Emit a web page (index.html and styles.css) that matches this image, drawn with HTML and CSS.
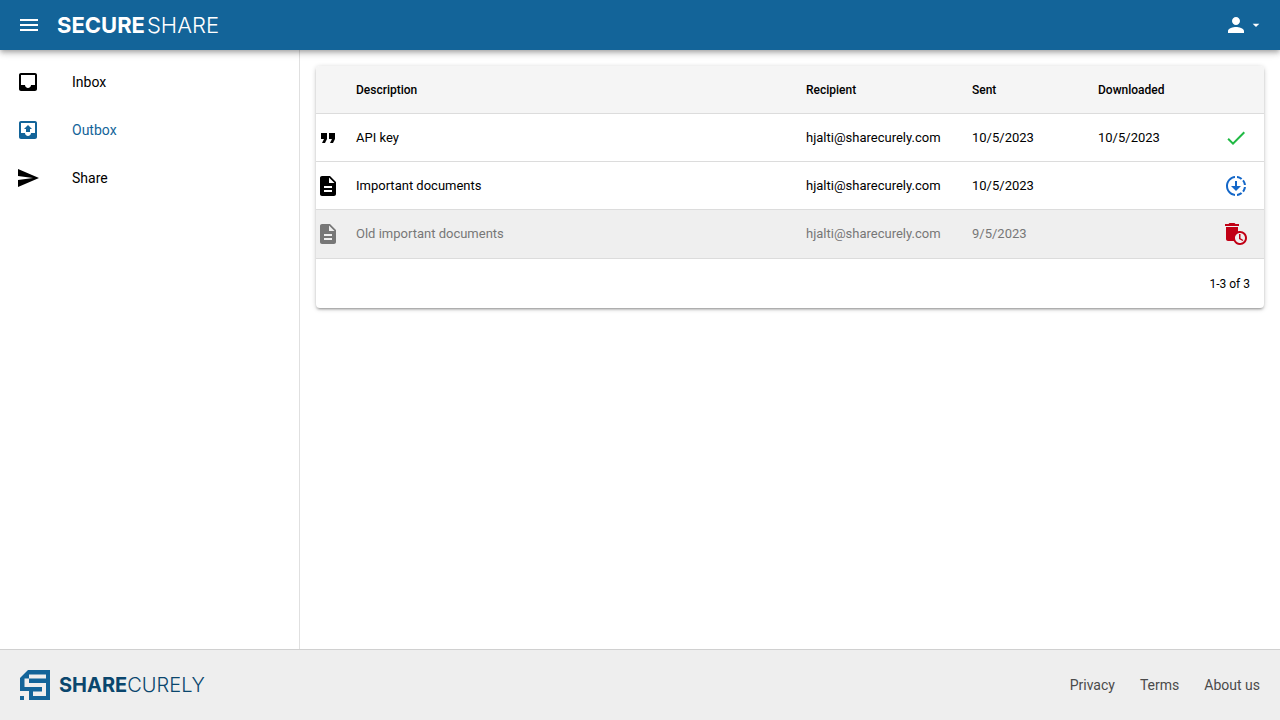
FILE: index.html
```html
<!DOCTYPE html>
<html lang="en">
<head>
<meta charset="utf-8">
<meta name="viewport" content="width=device-width, initial-scale=1">
<title>SecureShare – Outbox</title>
<link rel="stylesheet" href="styles.css">
</head>
<body>
<header class="topbar">
  <button class="icon-button" type="button" aria-label="Menu"><svg class="icon" viewBox="0 0 24 24"><path d="M3 18h18v-2H3v2zm0-5h18v-2H3v2zm0-7v2h18V6H3z"/></svg></button>
  <a class="brand" href="#"><span class="strong">SECURE</span><span class="thin">SHARE</span></a>
  <button class="account" type="button" aria-label="Account">
    <svg class="icon" viewBox="0 0 24 24"><path d="M12 12c2.210 0 4-1.790 4-4s-1.790-4-4-4-4 1.790-4 4 1.790 4 4 4zm0 2c-2.670 0-8 1.340-8 4v2h16v-2c0-2.660-5.330-4-8-4z"/></svg>
    <svg class="caret" viewBox="0 0 24 24"><path d="M7 10l5 5 5-5z"/></svg>
  </button>
</header>
<div class="middle">
  <nav class="sidebar">
    <a class="nav-item" href="#"><svg class="icon" viewBox="0 0 24 24"><path d="M19 3H4.990c-1.110 0-1.980.89-1.980 2L3 19c0 1.100.88 2 1.990 2H19c1.100 0 2-.9 2-2V5c0-1.110-.9-2-2-2zm0 12h-4c0 1.660-1.350 3-3 3s-3-1.340-3-3H4.990V5H19v10z"/></svg>Inbox</a>
    <a class="nav-item active" href="#"><svg class="icon" viewBox="0 0 24 24"><path d="M19 3H4.990c-1.110 0-1.980.89-1.980 2L3 19c0 1.100.88 2 1.990 2H19c1.100 0 2-.9 2-2V5c0-1.110-.9-2-2-2zm0 12h-4c0 1.660-1.350 3-3 3s-3-1.340-3-3H4.990V5H19v10zM8 11h2v3h4v-3h2l-4-4-4 4z"/></svg>Outbox</a>
    <a class="nav-item" href="#"><svg class="icon" viewBox="0 0 24 24"><path d="M2.010 21L23 12 2.010 3 2 10l15 2-15 2z"/></svg>Share</a>
  </nav>
  <main class="content">
    <div class="card">
      <table class="messages">
        <colgroup><col class="c-type"><col><col class="c-recipient"><col class="c-sent"><col class="c-downloaded"><col class="c-status"></colgroup>
        <thead>
          <tr><th></th><th>Description</th><th>Recipient</th><th>Sent</th><th>Downloaded</th><th></th></tr>
        </thead>
        <tbody>
          <tr>
            <td class="type"><svg class="icon" viewBox="0 0 24 24"><path d="M6 17h3l2-4V7H5v6h3zm8 0h3l2-4V7h-6v6h3z"/></svg></td>
            <td>API key</td><td>hjalti@sharecurely.com</td><td>10/5/2023</td><td>10/5/2023</td>
            <td class="status ok"><svg class="icon" viewBox="0 0 24 24"><path d="M9 16.170L4.830 12l-1.420 1.410L9 19 21 7l-1.410-1.410z"/></svg></td>
          </tr>
          <tr>
            <td class="type"><svg class="icon" viewBox="0 0 24 24"><path d="M14 2H6c-1.100 0-1.990.9-1.990 2L4 20c0 1.100.89 2 1.990 2H18c1.100 0 2-.9 2-2V8l-6-6zm2 16H8v-2h8v2zm0-4H8v-2h8v2zm-3-5V3.500L18.500 9H13z"/></svg></td>
            <td>Important documents</td><td>hjalti@sharecurely.com</td><td>10/5/2023</td><td></td>
            <td class="status pending"><svg class="icon" viewBox="0 0 24 24"><path d="M18.320 4.260C16.840 3.050 15.010 2.250 13 2.050v2.020c1.460.18 2.790.76 3.900 1.620l1.420-1.430zM19.930 11h2.020c-.2-2.010-1-3.840-2.210-5.320L18.310 7.100c.86 1.110 1.440 2.440 1.620 3.900zm-1.620 5.900l1.430 1.430c1.210-1.480 2.010-3.320 2.210-5.320h-2.020c-.18 1.450-.76 2.780-1.620 3.890zM13 19.930v2.020c2.010-.2 3.840-1 5.320-2.210l-1.430-1.430c-1.100.86-2.430 1.440-3.890 1.620zM13 12V7h-2v5H7l5 5 5-5h-4zm-2 7.930v2.020c-5.050-.5-9-4.760-9-9.950s3.950-9.450 9-9.950v2.020C7.050 4.560 4 7.920 4 12s3.050 7.440 7 7.930z"/></svg></td>
          </tr>
          <tr class="expired">
            <td class="type"><svg class="icon" viewBox="0 0 24 24"><path d="M14 2H6c-1.100 0-1.990.9-1.990 2L4 20c0 1.100.89 2 1.990 2H18c1.100 0 2-.9 2-2V8l-6-6zm2 16H8v-2h8v2zm0-4H8v-2h8v2zm-3-5V3.500L18.500 9H13z"/></svg></td>
            <td>Old important documents</td><td>hjalti@sharecurely.com</td><td>9/5/2023</td><td></td>
            <td class="status deleted"><svg class="icon" viewBox="0 0 24 24"><path fill-rule="evenodd" d="M15 2h-3.500l-1-1h-5l-1 1H1v2h14V2zM16 9c-.7 0-1.370.1-2 .29V5H2v12c0 1.100.9 2 2 2h5.680c1.120 2.360 3.530 4 6.320 4 3.870 0 7-3.130 7-7s-3.130-7-7-7zm0 12c-2.760 0-5-2.240-5-5s2.240-5 5-5 5 2.240 5 5-2.240 5-5 5zM16.500 12H15v5l3.600 2.100.8-1.200-2.900-1.700V12z"/></svg></td>
          </tr>
        </tbody>
      </table>
      <div class="pager">1-3 of 3</div>
    </div>
  </main>
</div>
<footer class="footer">
  <a class="company" href="#">
    <svg class="mark" viewBox="0 0 30 30"><path fill-rule="evenodd" d="M8 0H30V30H9V21H0V8zM9 4.500H26V8.500H9V13H26V26H13V21.500H22V17H4.500V8.500H9zM0 26h4v4H0z"/></svg>
    <span><span class="strong">SHARE</span><span class="thin">CURELY</span></span>
  </a>
  <nav class="links"><a href="#">Privacy</a><a href="#">Terms</a><a href="#">About us</a></nav>
</footer>
</body>
</html>
```
FILE: styles.css
```css
* { box-sizing: border-box; }
body { margin: 0; min-height: 100vh; display: flex; flex-direction: column; font: 14px/20px Roboto, sans-serif; color: #000; background: #fff; }
a { color: inherit; text-decoration: none; }
button { border: 0; padding: 0; background: none; color: inherit; cursor: pointer; }
svg { display: block; fill: currentColor; }
.icon { width: 24px; height: 24px; flex: none; }

.topbar { position: relative; display: flex; align-items: center; height: 50px; padding: 0 16px 0 17px; background: #136499; color: #fff; box-shadow: 0 2px 4px -1px rgba(0,0,0,.2), 0 4px 5px rgba(0,0,0,.14), 0 1px 10px rgba(0,0,0,.12); }
.brand { display: flex; gap: 2px; margin-left: 16px; font: 22px/32px Inter, sans-serif; }
.strong { font-weight: 700; }
.thin { font-weight: 300; }
.account { display: flex; align-items: center; margin-left: auto; }
.caret { width: 16px; height: 16px; }

.middle { flex: 1; display: flex; }
.sidebar { width: 300px; flex: none; padding-top: 8px; border-right: 1px solid #e0e0e0; }
.nav-item { display: flex; align-items: center; gap: 32px; height: 48px; padding: 0 16px; }
.nav-item.active { color: #136499; }

.content { flex: 1; min-width: 0; padding: 16px; }
.card { border-radius: 4px; overflow: hidden; background: #fff; box-shadow: 0 1px 5px rgba(0,0,0,.2), 0 2px 2px rgba(0,0,0,.14), 0 3px 1px -2px rgba(0,0,0,.12); }
.messages { width: 100%; border-collapse: separate; border-spacing: 0; table-layout: fixed; font-size: 13px; }
.messages th, .messages td { height: 48px; padding: 0 16px; text-align: left; border-bottom: 1px solid #dcdcdc; white-space: nowrap; }
.messages th { font-size: 12px; font-weight: 500; background: #f5f5f5; }
.messages .type { padding: 0; }
.messages .status .icon { margin-left: auto; }
.messages .expired td { height: 49px; background: #efefef; color: #777; }
.c-type { width: 24px; }
.c-recipient { width: 166px; }
.c-sent { width: 126px; }
.c-downloaded { width: 111px; }
.c-status { width: 71px; }
.messages .ok { color: #21ba45; }
.messages .pending { color: #1467c8; }
.messages .expired .deleted { color: #c10015; }
.pager { display: flex; align-items: center; justify-content: flex-end; height: 49px; padding: 0 14px; font-size: 12px; }

.footer { display: flex; align-items: center; justify-content: space-between; height: 71px; padding: 0 20px; background: #eee; border-top: 1px solid #d0d0d0; color: #4a4a4a; }
.company { display: flex; align-items: center; gap: 9px; color: #0a466d; font: 20px/30px Inter, sans-serif; }
.mark { width: 30px; height: 30px; color: #136499; }
.links { display: flex; gap: 25px; }
```
